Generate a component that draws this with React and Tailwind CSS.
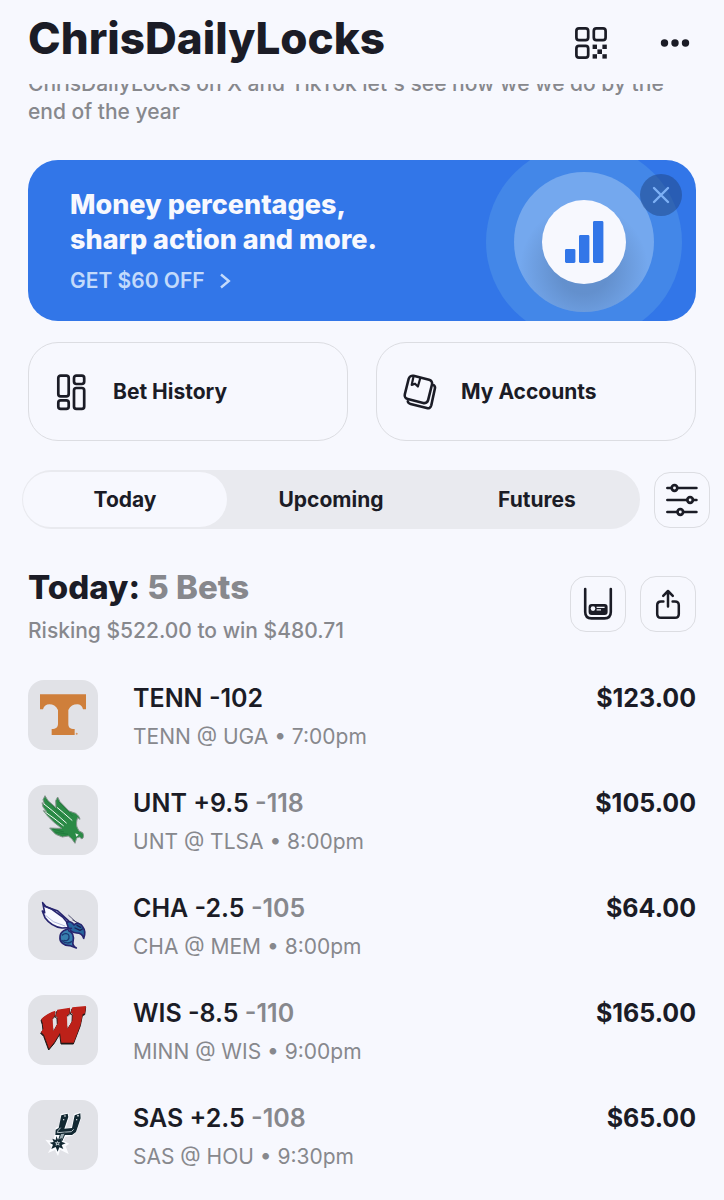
import { useState } from "react";

function QrIcon() {
  return (
    <svg width="34" height="34" viewBox="0 0 34 34" fill="none" stroke="#1b1c26" strokeWidth="2.7" aria-hidden="true">
      <rect x="2.4" y="2.4" width="11.8" height="11.8" rx="2.6" />
      <rect x="19.8" y="2.4" width="11.8" height="11.8" rx="2.6" />
      <rect x="2.4" y="19.8" width="11.8" height="11.8" rx="2.6" />
      <g fill="#1b1c26" stroke="none">
        <rect x="18.6" y="18.6" width="4.4" height="4.4" />
        <rect x="28.4" y="18.6" width="4.4" height="4.4" />
        <rect x="23.4" y="23.4" width="4.6" height="4.6" />
        <rect x="18.6" y="28.2" width="4.4" height="4.4" />
        <rect x="28.4" y="28.2" width="4.4" height="4.4" />
      </g>
    </svg>
  );
}

function DotsIcon() {
  return (
    <svg width="30" height="10" viewBox="0 0 30 10" fill="#1b1c26" aria-hidden="true">
      <circle cx="4.5" cy="5" r="3.7" />
      <circle cx="15" cy="5" r="3.7" />
      <circle cx="25.5" cy="5" r="3.7" />
    </svg>
  );
}

function HistoryIcon() {
  return (
    <svg width="30" height="38" viewBox="0 0 30 38" fill="none" stroke="#1b1c26" strokeWidth="2.7" aria-hidden="true">
      <rect x="2.3" y="2.6" width="10.4" height="20.8" rx="2.4" />
      <rect x="18" y="2.6" width="10.2" height="8.4" rx="2.4" />
      <rect x="2.3" y="27.4" width="10.4" height="8.4" rx="2.4" />
      <rect x="18" y="15" width="10.2" height="20.8" rx="2.4" />
    </svg>
  );
}

function AccountsIcon() {
  return (
    <svg width="34" height="36" viewBox="0 0 34 36" fill="none" stroke="#1b1c26" strokeWidth="2.6" strokeLinejoin="round" strokeLinecap="round" aria-hidden="true">
      <rect x="3.4" y="3.4" width="24" height="24" rx="4" transform="rotate(14 15.4 15.4)" />
      <path d="M10.400 3L8.700 11L12 9.700L14.900 12.500L17.100 4.700" strokeWidth="2.200" />
      <path d="M30.600 11C32 12 32.300 13 31.900 14.600L28.300 31.300C27.700 33.700 26 34.600 23.700 34L7.600 30C6 29.600 5 28.600 4.800 27.400" />
    </svg>
  );
}

function FilterIcon() {
  return (
    <svg width="34" height="34" viewBox="0 0 34 34" fill="none" stroke="#1b1c26" strokeWidth="2.7" strokeLinecap="round" aria-hidden="true">
      <path d="M2.4 5H6.600M12.400 5H31.400M2.400 17H22.200M28 17H31.400M2.400 29H12.400M18.200 29H31.400" />
      <circle cx="9.500" cy="5" r="2.800" />
      <circle cx="25.100" cy="17" r="2.800" />
      <circle cx="15.300" cy="29" r="2.800" />
    </svg>
  );
}

function SlipIcon() {
  return (
    <svg width="30" height="34" viewBox="0 0 30 34" fill="none" aria-hidden="true">
      <path d="M2.200 2V25.100C2.200 29.100 4.600 31.400 8.500 31.400H21.500C25.400 31.400 27.800 29.100 27.800 25.100V2" stroke="#1b1c26" strokeWidth="2.600" strokeLinecap="round" />
      <rect x="5.600" y="17" width="19" height="11" rx="3" fill="#1b1c26" />
      <circle cx="10" cy="21.600" r="2.300" fill="#f7f8fe" />
      <path d="M13.600 20.300H21.600M13.600 22.800H18" stroke="#f7f8fe" strokeWidth="1.200" />
    </svg>
  );
}

function ShareIcon() {
  return (
    <svg width="26" height="32" viewBox="0 0 26 32" fill="none" stroke="#1b1c26" strokeWidth="2.500" strokeLinecap="round" strokeLinejoin="round" aria-hidden="true">
      <path d="M8.400 13.400H6C3.600 13.400 2.200 14.800 2.200 17.200V26C2.200 28.400 3.600 29.800 6 29.800H20C22.400 29.800 23.800 28.400 23.800 26V17.200C23.800 14.800 22.400 13.400 20 13.400H17.600" />
      <path d="M13 18.400V3.200M8.200 7.800L13 3L17.800 7.800" />
    </svg>
  );
}

function BarsBadge() {
  return (
    <svg viewBox="0 0 196 161" className="h-full w-[196px]" aria-hidden="true">
      <defs>
        <radialGradient id="badgeShade" cx="50%" cy="50%" r="50%">
          <stop offset="40%" stopColor="#4a6c9c" stopOpacity="0.400" />
          <stop offset="100%" stopColor="#4a6c9c" stopOpacity="0" />
        </radialGradient>
        <clipPath id="badgeRing">
          <circle cx="98" cy="82" r="70" />
        </clipPath>
      </defs>
      <circle cx="98" cy="82" r="98" fill="#4387e8" />
      <circle cx="98" cy="82" r="70" fill="#74a8ee" />
      <g clipPath="url(#badgeRing)">
        <circle cx="98" cy="108" r="64" fill="url(#badgeShade)" />
      </g>
      <circle cx="98" cy="82" r="42" fill="#f7f8fe" />
      <g fill="#3276e8">
        <rect x="79" y="89" width="10.400" height="14" rx="1.400" />
        <rect x="93" y="75" width="10.400" height="28" rx="1.400" />
        <rect x="107" y="61" width="10.400" height="42" rx="1.400" />
      </g>
    </svg>
  );
}

function TennLogo() {
  return (
    <svg viewBox="24 29 210 210" className="size-full" aria-hidden="true">
      <path fill="#cf7f3b" d="M60 72H198V117H189C187 107 180 102 172 102C160 102 151 107 145 119V160C145 171 149 175 164 176V194H95V176C108 175 114 171 114 160V119C108 107 99 102 88 102C79 102 72 107 69 117H60Z" />
      <circle cx="170" cy="190" r="3" fill="#d99560" />
    </svg>
  );
}

function UntLogo() {
  return (
    <svg viewBox="24 344 210 210" className="size-full" aria-hidden="true">
      <g strokeLinejoin="round">
        <path fill="#2b8a46" stroke="#85948c" strokeWidth="3" d="M75 376L84 391L108 412L107 391L113 380L120 394L147 422L167 429C175 436 179 440 180 447L173 442C169 452 169 463 171 470L177 482L188 487C192 494 192 502 186 506L178 500L170 503L165 519L155 505L145 497L127 500L107 492L97 482L89 473L112 474L125 474L103 457L82 436L70 421L80 424L69 410L66 397L74 403L69 388Z" />
        <g stroke="#f4faf5" strokeWidth="3" fill="none" strokeLinecap="round">
          <path d="M72 401L97 421L139 458" />
          <path d="M77 426L102 444L130 466" />
          <path d="M112 412L130 427L156 450" />
        </g>
        <g stroke="#1c7239" strokeWidth="2" fill="none">
          <path d="M78 388L132 440M115 393L158 437M98 476L132 485M104 485L144 492" />
        </g>
        <path d="M166 489L176 493L169 499Z" fill="#eff6f1" />
      </g>
    </svg>
  );
}

function HornetsLogo() {
  return (
    <svg viewBox="24 29 210 210" className="size-full" aria-hidden="true">
      <g strokeLinejoin="round" strokeLinecap="round">
        <path d="M146 105L169 126L177 132M158 119L177 129" stroke="#3b3b62" strokeWidth="2.500" fill="none" />
        <path d="M68 67L78 79L112 91L145 121L153 142L126 143C101 139 85 126 75 112L67 92L74 97Z" fill="#f8f9ff" stroke="#27256f" strokeWidth="5" />
        <path d="M72 76L96 87L128 110L148 134" fill="none" stroke="#27256f" strokeWidth="5" />
        <path d="M77 105L100 124L135 137" fill="none" stroke="#8f98c8" strokeWidth="2" />
        <path d="M140 127C147 121 157 125 162 134C169 125 183 129 188 139C195 148 196 161 191 174C188 162 181 158 170 158C157 158 145 149 140 127Z" fill="#27659e" stroke="#27256f" strokeWidth="5" />
        <path d="M165 143L180 150L187 146M171 135L182 141" fill="none" stroke="#1b2157" strokeWidth="4" />
        <path d="M154 144C139 145 120 153 120 170C118 185 132 197 151 196L169 203C161 198 157 191 159 184C162 170 159 156 146 151" fill="#377eae" stroke="#27256f" strokeWidth="5" />
        <path d="M127 164C134 157 146 159 147 167C149 178 140 183 132 180M126 180C134 190 149 190 156 183" fill="none" stroke="#1c3974" strokeWidth="4" />
      </g>
    </svg>
  );
}

function WisLogo() {
  const w =
    "M64 416C75 404 90 396 106 391L104 408L98 414L100 453L113 429L112 410L107 407L112 388L150 382L148 401L141 405L142 446L157 421L158 400L152 397L157 381L198 377L195 399L188 402L182 432L161 487L124 487L120 458L103 486L87 505L72 464L63 455L70 446L68 429Z";
  return (
    <svg viewBox="24 344 210 210" className="size-full" aria-hidden="true">
      <path d={w} fill="#211817" stroke="#211817" strokeWidth="3" transform="translate(-1 4)" />
      <path d={w} fill="#bd2119" />
      <path d="M104 410L99 416L101 444M112 412L107 409M148 403L142 408L143 438M158 402L153 399" fill="none" stroke="#f0e2e3" strokeWidth="2" />
    </svg>
  );
}

function SpursLogo() {
  return (
    <svg viewBox="24 29 210 210" className="size-full" aria-hidden="true">
      <g strokeLinejoin="round">
        <path d="M122 71L145 67L148 80L137 114L154 111L162 71L182 65L184 84L169 126L157 136L136 140L130 151L148 160L137 168L146 191L120 178L114 197L105 179L84 188L94 170L76 148L99 151L103 139L107 112L119 108Z" fill="#fbfcff" />
        <path d="M124 75L143 70L145 80L133 115L156 113L164 75L181 69L182 84L168 125L156 134L106 134L107 118L116 113Z" fill="#122832" />
        <path d="M122 112L114 121L112 127L154 124L161 117" fill="none" stroke="#b7c3c9" strokeWidth="3" />
        <circle cx="135" cy="77" r="2.500" fill="#f4f6f9" />
        <circle cx="131" cy="88" r="2" fill="#f4f6f9" />
        <circle cx="174" cy="76" r="2.500" fill="#f4f6f9" />
        <circle cx="170" cy="88" r="2" fill="#f4f6f9" />
        <path d="M122 130L136 128L125 153L116 148Z" fill="#9aabb2" stroke="#122832" strokeWidth="3" />
        <path d="M109 137L114 148L126 143L124 154L137 159L125 164L130 176L118 171L113 184L107 170L94 176L99 163L89 157L101 155L97 145L107 149Z" fill="#122832" />
        <path d="M112 151L115 156L121 156L117 160L119 166L113 163L107 166L108 160L104 156L110 156Z" fill="#b7c3c9" />
        <circle cx="113" cy="159" r="2" fill="#122832" />
      </g>
    </svg>
  );
}

const bets = [
  { pick: "TENN -102", odds: "", game: "TENN @ UGA • 7:00pm", amount: "$123.00", Logo: TennLogo },
  { pick: "UNT +9.5", odds: "-118", game: "UNT @ TLSA • 8:00pm", amount: "$105.00", Logo: UntLogo },
  { pick: "CHA -2.5", odds: "-105", game: "CHA @ MEM • 8:00pm", amount: "$64.00", Logo: HornetsLogo },
  { pick: "WIS -8.5", odds: "-110", game: "MINN @ WIS • 9:00pm", amount: "$165.00", Logo: WisLogo },
  { pick: "SAS +2.5", odds: "-108", game: "SAS @ HOU • 9:30pm", amount: "$65.00", Logo: SpursLogo },
];

const tabs = ["Today", "Upcoming", "Futures"];

function SquareButton({ label, children }) {
  return (
    <button type="button" aria-label={label} className="flex size-14 shrink-0 items-center justify-center rounded-2xl border border-[#dcdde2]">
      {children}
    </button>
  );
}

function BetRow({ bet }) {
  const { pick, odds, game, amount, Logo } = bet;
  return (
    <li className="flex items-start">
      <div className="size-[70px] shrink-0 overflow-hidden rounded-2xl bg-[#e1e2e7]">
        <Logo />
      </div>
      <div className="ml-[35px] min-w-0 flex-1">
        <div className="flex justify-between text-[25px] leading-9 font-semibold">
          <p>
            {pick} {odds && <span className="text-[#87888d]">{odds}</span>}
          </p>
          <p className="font-bold">{amount}</p>
        </div>
        <p className="mt-px text-[21px] leading-10 text-[#87888d]">{game}</p>
      </div>
    </li>
  );
}

export default function App() {
  const [active, setActive] = useState("Today");
  return (
    <div className="min-h-screen bg-[#f7f8fe] font-['Inter',sans-serif] text-[#1b1c26]">
      <header className="sticky top-0 z-10 flex h-[84px] items-center justify-between bg-[#f7f8fe] px-7 pb-2">
        <h1 className="text-[44px] leading-none font-extrabold">ChrisDailyLocks</h1>
        <div className="flex items-center gap-[52px] pt-2.5 pr-1.5">
          <button type="button" aria-label="Show QR code"><QrIcon /></button>
          <button type="button" aria-label="More options"><DotsIcon /></button>
        </div>
      </header>

      <main className="px-7 pb-8">
        <p className="-mt-3.5 text-[21px] leading-7 font-medium text-[#87888d]">
          ChrisDailyLocks on X and TikTok let's see how we we do by the end of the year
        </p>

        <section className="relative mt-[34px] flex h-[161px] items-center justify-between overflow-hidden rounded-[30px] bg-[#3276e8] pr-3.5 pl-[42px]">
          <div className="pt-1 text-[#f7f8fe]">
            <h2 className="text-[27px] leading-[35px] font-extrabold">
              Money percentages,
              <br />
              sharp action and more.
            </h2>
            <a href="#offer" className="mt-1.5 flex items-center gap-3.5 text-[21px] leading-9 font-semibold text-[#c3dafb]">
              GET $60 OFF
              <svg width="12" height="16" viewBox="0 0 12 16" fill="none" stroke="currentColor" strokeWidth="2.400" aria-hidden="true">
                <path d="M2 1.500L9.800 8L2 14.500" />
              </svg>
            </a>
          </div>
          <BarsBadge />
          <button type="button" aria-label="Dismiss" className="absolute top-3.5 right-3.5 flex size-[42px] items-center justify-center rounded-full bg-[#1f4480]/50">
            <svg width="18" height="18" viewBox="0 0 18 18" stroke="#7db0f5" strokeWidth="2.400" strokeLinecap="round" aria-hidden="true">
              <path d="M2 2L16 16M16 2L2 16" />
            </svg>
          </button>
        </section>

        <div className="mt-[21px] grid grid-cols-2 gap-7 text-[21px] font-bold">
          <a href="#history" className="flex h-[99px] items-center rounded-[30px] border border-[#dcdde2] pl-[27px]">
            <HistoryIcon />
            <span className="ml-[27px]">Bet History</span>
          </a>
          <a href="#accounts" className="flex h-[99px] items-center rounded-[30px] border border-[#dcdde2] pl-[26px]">
            <AccountsIcon />
            <span className="ml-6">My Accounts</span>
          </a>
        </div>

        <div className="-mr-3.5 -ml-1.5 mt-[29px] flex items-center gap-3.5">
          <div role="tablist" className="grid h-[59px] flex-1 grid-cols-3 rounded-full bg-[#e9eaef] py-0.5">
            {tabs.map((tab) => (
              <button
                key={tab}
                type="button"
                role="tab"
                aria-selected={active === tab}
                onClick={() => setActive(tab)}
                className={active === tab ? "mx-px rounded-full bg-[#f7f8fe] text-[21px] font-bold" : "mx-px rounded-full text-[21px] font-bold"}
              >
                {tab}
              </button>
            ))}
          </div>
          <SquareButton label="Filter bets"><FilterIcon /></SquareButton>
        </div>

        <div className="mt-[34px] flex items-center justify-between">
          <div className="pt-1">
            <h2 className="text-[33px] leading-10 font-extrabold">
              Today: <span className="text-[#87888d]">5 Bets</span>
            </h2>
            <p className="mt-2.5 text-[21px] leading-7 font-medium text-[#87888d]">Risking $522.00 to win $480.71</p>
          </div>
          <div className="flex gap-3.5">
            <SquareButton label="Bet slip"><SlipIcon /></SquareButton>
            <SquareButton label="Share"><ShareIcon /></SquareButton>
          </div>
        </div>

        <ul className="mt-[35px] flex flex-col gap-7">
          {bets.map((bet) => (
            <BetRow key={bet.pick} bet={bet} />
          ))}
        </ul>
      </main>
    </div>
  );
}
